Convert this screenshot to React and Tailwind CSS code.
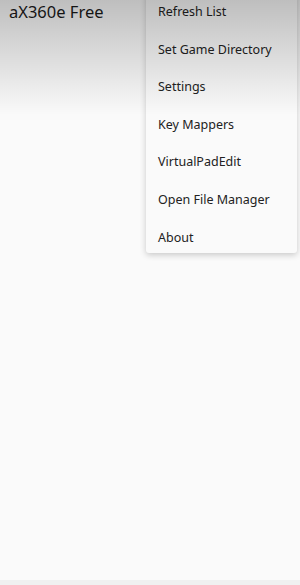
const ITEMS = ['Refresh List', 'Set Game Directory', 'Settings', 'Key Mappers', 'VirtualPadEdit', 'Open File Manager', 'About'];

const App = () => {
  return (
    <div className="relative w-[300px] h-[585px] overflow-hidden bg-[#fafafa]" style={{ fontFamily: '"Noto Sans", sans-serif' }}>
      {/* App bar */}
      <div className="h-[56px] px-[9px] pt-[1px]">
        <h1 className="text-[16.5px] leading-[22px] text-[#1a1a1a]">aX360e Free</h1>
      </div>

      {/* Bottom strip */}
      <div className="absolute left-0 right-0 bottom-0 h-[5px] bg-[#f0f0f0]" />

      {/* Overflow menu */}
      <div className="absolute left-[146px] top-[-8px] w-[151px] bg-[#fafafa] rounded-[3px] shadow-[0_2px_6px_rgba(0,0,0,0.2)]">
        {ITEMS.map((item, i) => (
          <div key={item} className={i === ITEMS.length - 1 ? 'h-[36px] flex items-center pl-[12px] pt-[6px] text-[12.5px] text-[#222222]' : 'h-[37.5px] flex items-center pl-[12px] pt-[4px] text-[12.5px] text-[#222222]'}>
            {item}
          </div>
        ))}
      </div>

      {/* Top fade overlay */}
      <div className="absolute left-0 right-0 top-0 h-[115px] pointer-events-none bg-gradient-to-b from-[rgba(0,0,0,0.24)] to-transparent" />
    </div>
  );
};

export default App;
